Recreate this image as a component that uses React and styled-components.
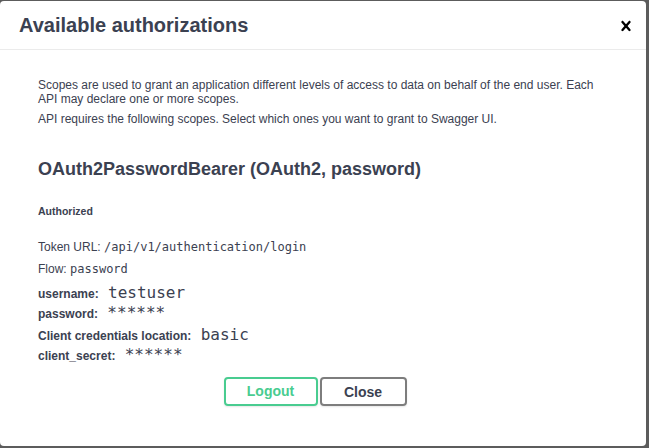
import React from 'react';
import styled, { createGlobalStyle } from 'styled-components';

const GlobalStyle = createGlobalStyle`
	html, body {
		margin: 0;
		padding: 0;
		background: #5c5c5c;
	}
	body {
		font-family: "Liberation Sans", Arial, sans-serif;
		color: #3b4151;
	}
`;

const Modal = styled.div`
	width: 646px;
	height: 445px;
	margin-top: 1px;
	background: #ffffff;
	border-radius: 4px;
	display: flex;
	flex-direction: column;
	overflow: hidden;
`;

const Header = styled.div`
	height: 48px;
	flex: 0 0 auto;
	display: flex;
	align-items: center;
	justify-content: space-between;
	padding: 0 10px 0 19px;
	border-bottom: 1px solid #ebebeb;
`;

const Title = styled.h3`
	margin: 0;
	font-size: 20px;
	font-weight: 700;
	color: #3b4151;
`;

const CloseIcon = styled.button`
	border: none;
	background: none;
	padding: 0;
	margin-top: 1px;
	width: 20px;
	height: 20px;
	display: flex;
	cursor: pointer;
`;

const Content = styled.div`
	padding: 28px 38px 0;
`;

const Paragraph = styled.p`
	margin: 0 0 ${(p) => p.$after || 0}px;
	font-size: 12px;
	line-height: 14px;
	color: #3b4151;
`;

const SchemeTitle = styled.h4`
	margin: 33px 0 0;
	font-size: 18px;
	line-height: 21px;
	font-weight: 700;
	color: #3b4151;
`;

const Status = styled.h6`
	margin: 25px 0 0;
	font-size: 10.5px;
	line-height: 12px;
	font-weight: 700;
	color: #3b4151;
`;

const Row = styled.div`
	margin-top: ${(p) => p.$top}px;
	font-size: 12px;
	line-height: ${(p) => (p.$big ? 18 : 14)}px;
	color: #3b4151;
`;

const Label = styled.span`
	font-weight: ${(p) => (p.$bold ? 700 : 400)};
`;

const Code = styled.code`
	font-family: "DejaVu Sans Mono", monospace;
	font-size: ${(p) => (p.$big ? 16 : 12)}px;
	margin-left: ${(p) => p.$gap || 0}px;
	color: #3b4151;
`;

const ButtonRow = styled.div`
	margin-top: 12px;
	display: flex;
	justify-content: center;
	gap: 2px;
	padding-right: 16px;
`;

const Button = styled.button`
	font-family: "Liberation Sans", Arial, sans-serif;
	font-size: 14px;
	font-weight: 700;
	height: 29px;
	width: ${(p) => p.$width}px;
	padding: 0 0 ${(p) => p.$lift || 0}px;
	background: transparent;
	border: 2px solid ${(p) => (p.$primary ? '#49cc90' : '#7d7d7d')};
	color: ${(p) => (p.$primary ? '#49cc90' : '#3b4151')};
	border-radius: 4px;
	box-shadow: 0 1px 2px rgba(0, 0, 0, 0.1);
	cursor: pointer;
`;

export default function App() {
	return (
		<>
			<GlobalStyle />
			<Modal>
				<Header>
					<Title>Available authorizations</Title>
					<CloseIcon aria-label="Close">
						<svg width="20" height="20" viewBox="0 0 20 20">
							<path
								fill="#000"
								d="M14.348 14.849c-.469.469-1.229.469-1.697 0L10 11.819l-2.651 3.029c-.469.469-1.229.469-1.697 0-.469-.469-.469-1.229 0-1.697l2.758-3.15-2.759-3.152c-.469-.469-.469-1.228 0-1.697.469-.469 1.228-.469 1.697 0L10 8.183l2.651-3.031c.469-.469 1.228-.469 1.697 0 .469.469.469 1.229 0 1.697l-2.758 3.152 2.758 3.15c.469.469.469 1.229 0 1.698z"
							/>
						</svg>
					</CloseIcon>
				</Header>
				<Content>
					<Paragraph $after={6}>
						Scopes are used to grant an application different levels of access to data on behalf of the end user. Each API may declare one or more scopes.
					</Paragraph>
					<Paragraph>
						API requires the following scopes. Select which ones you want to grant to Swagger UI.
					</Paragraph>
					<SchemeTitle>OAuth2PasswordBearer (OAuth2, password)</SchemeTitle>
					<Status>Authorized</Status>
					<Row $top={23}>
						<Label>Token URL:</Label> <Code>/api/v1/authentication/login</Code>
					</Row>
					<Row $top={8}>
						<Label>Flow:</Label> <Code>password</Code>
					</Row>
					<Row $top={8} $big>
						<Label $bold>username:</Label> <Code $big $gap={6}>testuser</Code>
					</Row>
					<Row $top={1} $big>
						<Label $bold>password:</Label> <Code $big $gap={6}>******</Code>
					</Row>
					<Row $top={3} $big>
						<Label $bold>Client credentials location:</Label> <Code $big $gap={6}>basic</Code>
					</Row>
					<Row $top={1} $big>
						<Label $bold>client_secret:</Label> <Code $big $gap={6}>******</Code>
					</Row>
					<ButtonRow>
						<Button $primary $width={94} $lift={2}>Logout</Button>
						<Button $width={87}>Close</Button>
					</ButtonRow>
				</Content>
			</Modal>
		</>
	);
}
